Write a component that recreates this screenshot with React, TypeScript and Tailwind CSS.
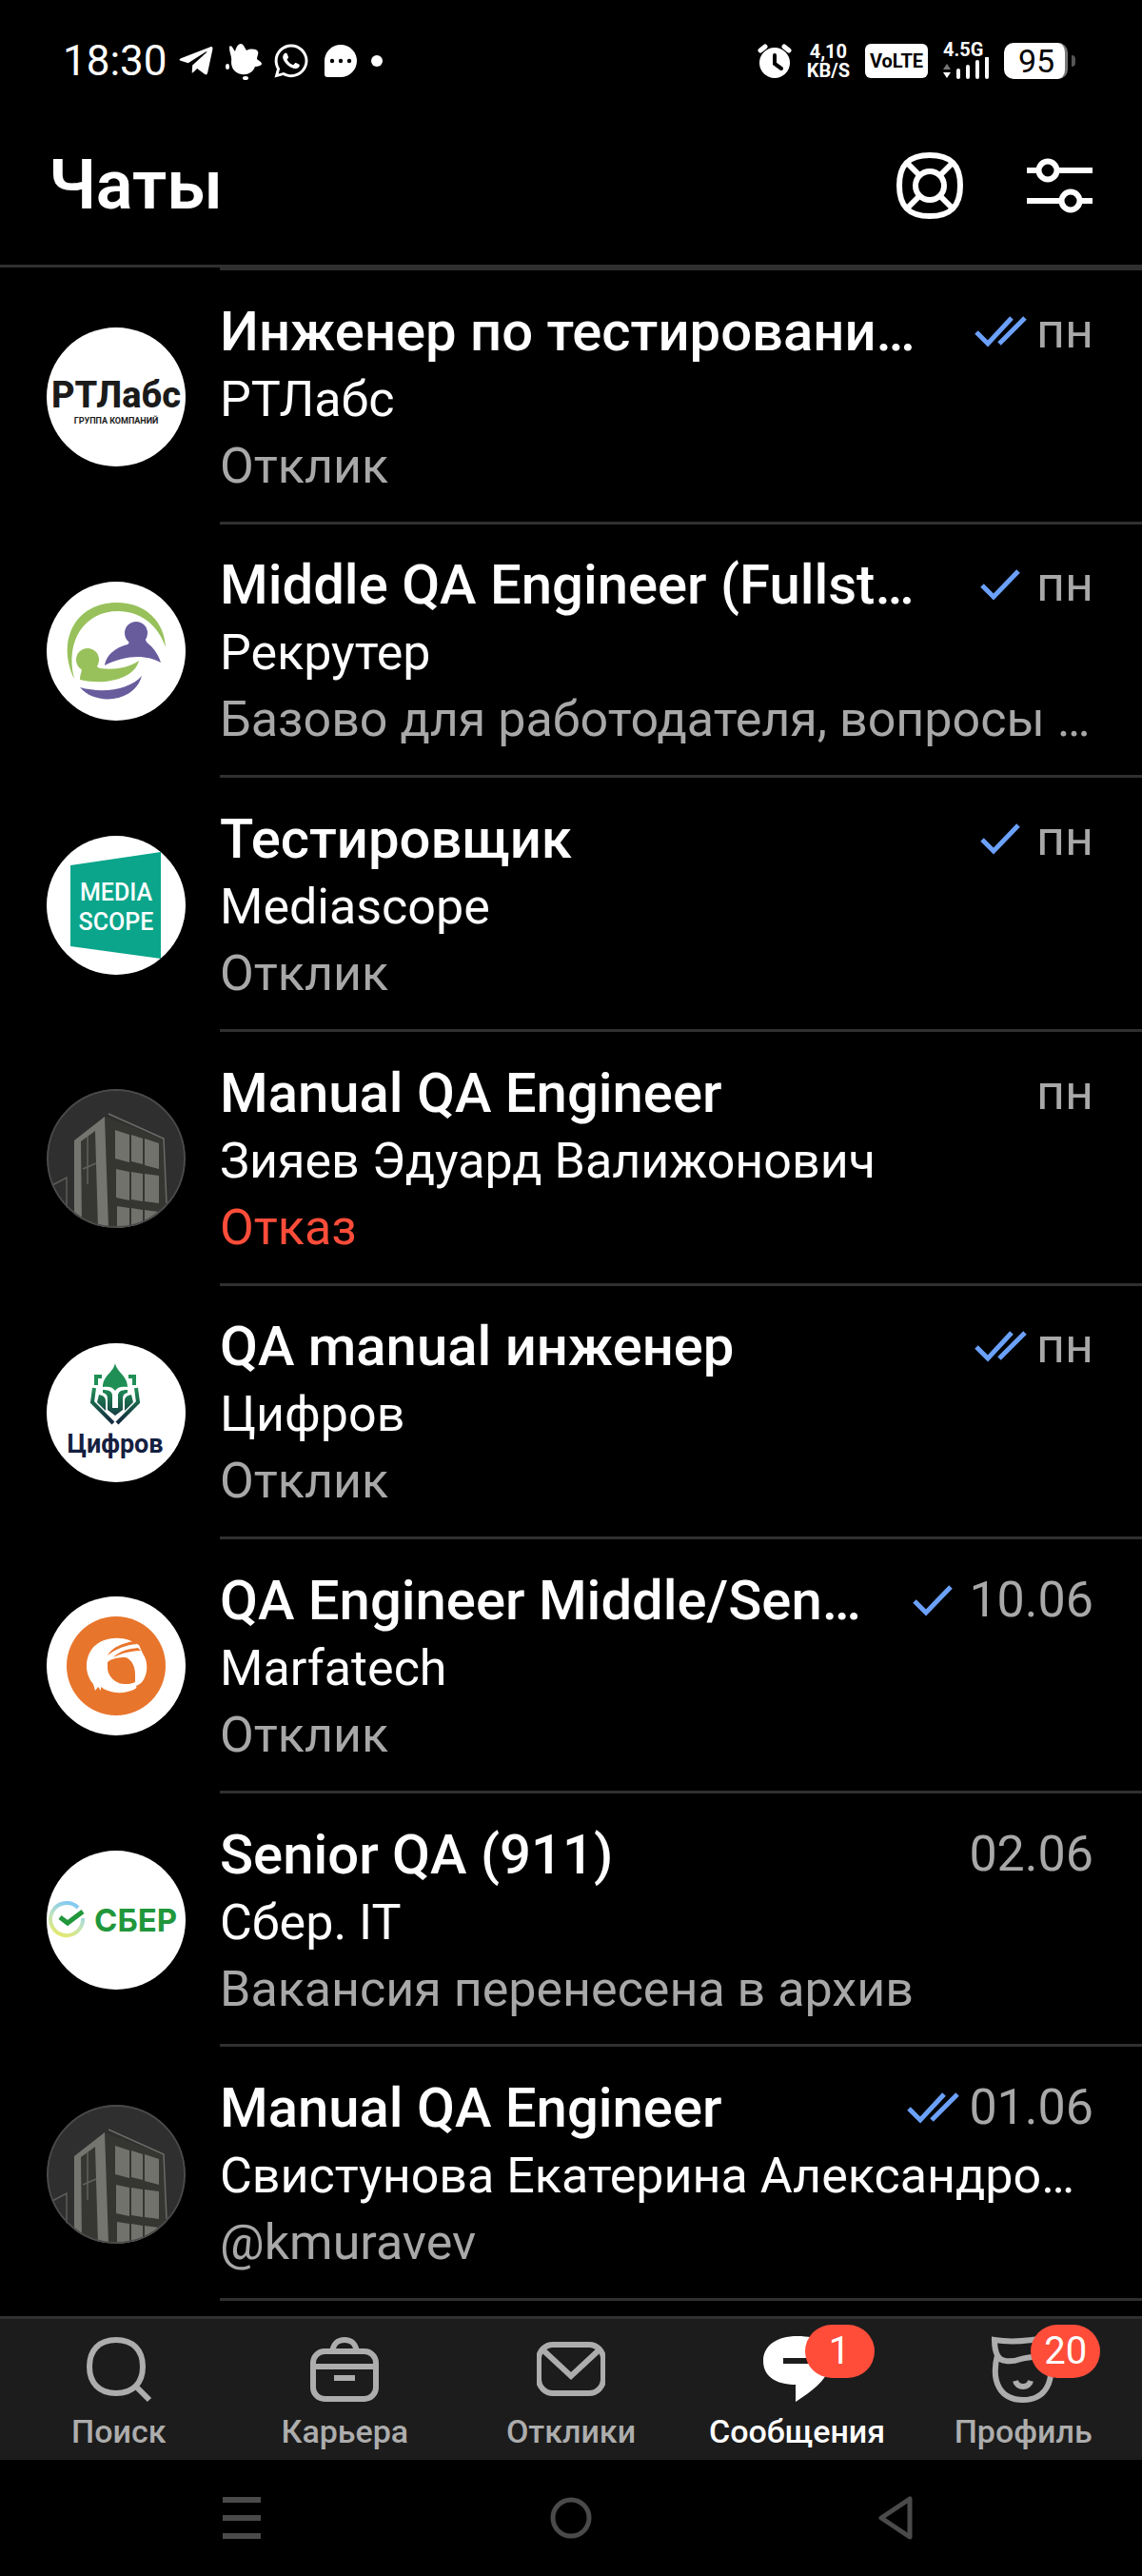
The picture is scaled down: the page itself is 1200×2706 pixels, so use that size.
import type { ReactNode } from 'react'
import { FaTelegramPlane, FaWhatsapp } from 'react-icons/fa'

type Chat = {
  id: number
  title: string
  company: string
  preview: string
  date: string
  status?: 'sent' | 'read'
  rejected?: boolean
  logo: ReactNode
}

/* ---------- avatars (all drawn on a 146x146 circle) ---------- */

function RtLabsLogo() {
  return (
    <svg viewBox="0 0 146 146" className="size-full bg-white">
      <text x="73" y="84" textAnchor="middle" fill="#1b1b1b" className="font-[Roboto,sans-serif] text-[38px] font-extrabold">
        РТЛабс
      </text>
      <text x="73" y="101" textAnchor="middle" fill="#1b1b1b" className="font-[Roboto,sans-serif] text-[9px] font-bold">
        ГРУППА КОМПАНИЙ
      </text>
    </svg>
  )
}

function RecruiterLogo() {
  return (
    <svg viewBox="0 0 146 146" className="size-full bg-white">
      <g fill="#98c15c">
        <path d="M29 102C10 62 30 22 74 22c30 0 50 20 51 47C117 45 98 31 75 31 40 31 19 62 29 102Z" />
        <circle cx="43" cy="82" r="12" />
        <path d="M36 90c2 4-1 6-1 13 25 6 57 0 62-20-12 8-27 10-41 8-4-1-3-3-2-6Z" />
      </g>
      <g fill="#685c9d">
        <circle cx="94" cy="54" r="12" />
        <path d="M61 88c2-13 15-20 24-22 2-1 2-3 0-8h19c-1 5 2 6 6 10 5 5 8 11 10 17-14-8-36-9-59 3Z" />
        <path d="M35 111c15 19 57 17 65-12-12 14-40 19-65 12Z" />
      </g>
    </svg>
  )
}

function MediascopeLogo() {
  return (
    <svg viewBox="0 0 146 146" className="size-full bg-white">
      <path d="M25 31 120 17v112L25 116Z" fill="#0aa58b" />
      <g fill="#fff" textAnchor="middle" className="font-[Roboto,sans-serif] text-[25px] font-medium">
        <text x="73" y="68">MEDIA</text>
        <text x="73" y="99">SCOPE</text>
      </g>
    </svg>
  )
}

function BuildingLogo() {
  return (
    <svg viewBox="0 0 146 146" className="size-full bg-[#2f2f2f]">
      <path d="M6 101 21 93v40" fill="none" stroke="#5c5c59" strokeWidth="1.5" />
      <path d="M61 29 124 53l2 93H64Z" fill="#353532" />
      <path d="M29 54 61 29l4 117H29Z" fill="#757570" />
      <path d="M36 55 51 44l3 102H37Z" fill="#363633" />
      <path d="M43 50v50M38 84l14-6" stroke="#60605c" strokeWidth="1.5" />
      <path d="m65 26 58 26 3 68" fill="none" stroke="#6a6a66" strokeWidth="1.5" />
      <g fill="#72726d">
        <path d="m72 43 15 5v29l-15-4ZM89 48l12 4v27l-12-3ZM103 52l15 5v27l-15-4Z" />
        <path d="m73 84 14 3v30l-14-3ZM89 87l12 2v29l-12-2ZM103 89l15 2v29l-15-2Z" />
        <path d="m74 123 13 2v21H74ZM89 125l12 2v19H89ZM103 127l15 2v17h-15Z" />
      </g>
      <circle cx="73" cy="73" r="72" fill="none" stroke="#4a4a4a" strokeWidth="2" />
    </svg>
  )
}

function TsifrovLogo() {
  return (
    <svg viewBox="0 0 146 146" className="size-full bg-white">
      <defs>
        <linearGradient id="helmet" gradientUnits="userSpaceOnUse" x1="0" y1="21" x2="0" y2="86">
          <stop offset="0.4" stopColor="#1f8f55" />
          <stop offset="1" stopColor="#14233f" />
        </linearGradient>
      </defs>
      <g fill="url(#helmet)">
        <path d="M72 21c2 10 13 13 13 25-6-1-11 0-13 4-2-4-7-5-13-4 0-12 11-15 13-25Z" />
        <path d="M59 49c7 0 10 2 10 6v13h6V55c0-4 3-6 10-6v3c-4 1-5 3-5 7v11l-8 6-8-6V59c0-4-1-6-5-7Z" />
        <path d="M55 54c5 1 7 3 7 7v10l-9-9ZM89 54c-5 1-7 3-7 7v10l9-9Z" />
      </g>
      <g fill="none" stroke="url(#helmet)" strokeWidth="4">
        <path d="M58 35h-6v9M86 35h6v9M50 47l-2 15 22 22M94 47l2 15-22 22" />
      </g>
      <text x="72" y="115" textAnchor="middle" fill="#14203f" className="font-[Roboto,sans-serif] text-[27px] font-bold">
        Цифров
      </text>
    </svg>
  )
}

function MarfatechLogo() {
  return (
    <svg viewBox="0 0 146 146" className="size-full bg-white">
      <circle cx="73" cy="73" r="52" fill="#e8752c" />
      <path
        d="M87 46C72 41 55 45 47 56c-8 12-6 27 2 36l2 7 3-4 3 4v-4c13 10 37 8 45-7 5-10 4-21-1-28l-4-9-6-3Z"
        fill="#fff"
      />
      <path d="M64 69c4-4 12-5 19-5 6 2 10 9 10 18v8c-3 2-12 3-17 1-7-3-12-9-12-16Z" fill="#e8752c" />
      <path d="M64 62c5-9 16-13 28-15l3 3c-12 1-22 5-31 12ZM70 64c7-7 16-9 26-10l3 3c-10 0-18 2-29 7ZM94 94c5-2 8-5 10-11 0 8-3 13-9 15Z" fill="#e8752c" />
    </svg>
  )
}

function SberLogo() {
  return (
    <svg viewBox="0 0 146 146" className="size-full bg-white">
      <defs>
        <linearGradient id="sber" x1="0.6" y1="0" x2="0.2" y2="1">
          <stop offset="0" stopColor="#83c9f2" />
          <stop offset="0.5" stopColor="#bfe3c0" />
          <stop offset="1" stopColor="#e6e86a" />
        </linearGradient>
      </defs>
      <path d="M33 60A17 17 0 1 0 38 71" fill="none" stroke="url(#sber)" strokeWidth="4" />
      <path d="m14 70 8 6 16-12" fill="none" stroke="#21973b" strokeWidth="5" />
      <text x="50" y="85" fill="#21973b" className="font-[Inter,sans-serif] text-[33px] font-bold">
        СБЕР
      </text>
    </svg>
  )
}

/* ---------- data ---------- */

const CHATS: Chat[] = [
  { id: 1, title: 'Инженер по тестировани…', company: 'РТЛабс', preview: 'Отклик', date: 'пн', status: 'read', logo: <RtLabsLogo /> },
  { id: 2, title: 'Middle QA Engineer (Fullst…', company: 'Рекрутер', preview: 'Базово для работодателя, вопросы …', date: 'пн', status: 'sent', logo: <RecruiterLogo /> },
  { id: 3, title: 'Тестировщик', company: 'Mediascope', preview: 'Отклик', date: 'пн', status: 'sent', logo: <MediascopeLogo /> },
  { id: 4, title: 'Manual QA Engineer', company: 'Зияев Эдуард Валижонович', preview: 'Отказ', date: 'пн', rejected: true, logo: <BuildingLogo /> },
  { id: 5, title: 'QA manual инженер', company: 'Цифров', preview: 'Отклик', date: 'пн', status: 'read', logo: <TsifrovLogo /> },
  { id: 6, title: 'QA Engineer Middle/Sen…', company: 'Marfatech', preview: 'Отклик', date: '10.06', status: 'sent', logo: <MarfatechLogo /> },
  { id: 7, title: 'Senior QA (911)', company: 'Сбер. IT', preview: 'Вакансия перенесена в архив', date: '02.06', logo: <SberLogo /> },
  { id: 8, title: 'Manual QA Engineer', company: 'Свистунова Екатерина Александро…', preview: '@kmuravev', date: '01.06', status: 'read', logo: <BuildingLogo /> },
]

/* ---------- status bar ---------- */

function StatusBar() {
  return (
    <div className="flex h-32 items-center justify-between pr-[70px] pl-[66px]">
      <div className="flex items-center gap-2.5">
        <span className="text-[44px] leading-none">18:30</span>
        <FaTelegramPlane className="size-10" />
        <svg viewBox="0 0 40 40" className="size-10" fill="currentColor">
          <path d="M5 6c0-3 3-2 4 1l2 3c1-4 3-8 6-8s4 4 6 7c4-2 10-2 12 1 1 3-1 5-1 8 2 2 5 3 5 5s-4 3-7 3c-2 6-8 9-14 8-7-1-11-6-11-13 1-6-2-9-2-15Z" />
          <ellipse cx="3" cy="26" rx="2" ry="3" />
          <ellipse cx="22" cy="38" rx="3" ry="2" />
        </svg>
        <FaWhatsapp className="size-10" />
        <svg viewBox="0 0 36 36" className="mx-1 size-9">
          <path d="M1 18a17 17 0 1 1 17 17H4c-2 0-3-1-3-3Z" fill="currentColor" />
          <circle cx="9" cy="18" r="2.2" />
          <circle cx="18" cy="18" r="2.2" />
          <circle cx="27" cy="18" r="2.2" />
        </svg>
        <span className="size-3 rounded-full bg-white" />
      </div>
      <div className="flex items-center gap-4">
        <svg viewBox="0 0 36 38" className="h-[38px] w-9">
          <circle cx="18" cy="21" r="16" fill="currentColor" />
          <path d="m3 8 5-4M33 8l-5-4" stroke="currentColor" strokeWidth="5" strokeLinecap="round" />
          <path d="M18 13v9l7 5" fill="none" stroke="#000" strokeWidth="4" strokeLinecap="round" />
        </svg>
        <span className="flex flex-col items-center text-xl leading-5 font-bold">
          <span>4,10</span>
          <span>KB/S</span>
        </span>
        <span className="flex h-9 w-[66px] items-center justify-center rounded-md bg-white text-xl font-bold text-black">
          VoLTE
        </span>
        <span className="flex w-12 flex-col">
          <span className="text-xl leading-4 font-bold">4.5G</span>
          <svg viewBox="0 0 48 24" className="h-6 w-12">
            <path d="m0 13 4-6 4 6Z" fill="#777" />
            <path d="m0 16 4 6 4-6Z" fill="currentColor" />
            <path d="M16 14v7M26 10v11M36 5v16M46 1v20" stroke="currentColor" strokeWidth="4" strokeLinecap="round" />
          </svg>
        </span>
        <span className="flex items-center gap-1">
          <span className="flex h-[38px] w-[67px] items-center justify-center rounded-[10px] border-r-3 border-[#777] bg-white pl-1 text-[34px] leading-none text-black">
            95
          </span>
          <span className="h-3 w-1 rounded-r bg-[#555]" />
        </span>
      </div>
    </div>
  )
}

function Header() {
  return (
    <header className="flex h-[153px] items-center justify-between border-b-3 border-[#303030] pr-[51px] pb-4 pl-[51px]">
      <h1 className="text-[72px] leading-[88px] font-semibold">Чаты</h1>
      <div className="flex gap-16">
        <button type="button" aria-label="Помощь">
          <svg viewBox="0 0 72 72" className="size-[72px]" fill="none" stroke="currentColor" strokeWidth="6">
            <path d="M36 4C58 4 68 14 68 36S58 68 36 68 4 58 4 36 14 4 36 4Z" />
            <circle cx="36" cy="36" r="15" />
            <path d="m13 13 13 13M59 13 46 26M13 59l13-13M59 59 46 46" />
          </svg>
        </button>
        <button type="button" aria-label="Фильтры">
          <svg viewBox="0 0 72 72" className="size-[72px]" fill="none" stroke="currentColor" strokeWidth="6">
            <path d="M2 20h12M33 20h38M2 52h36M58 52h13" />
            <circle cx="24" cy="20" r="9.5" />
            <circle cx="48" cy="52" r="9.5" />
          </svg>
        </button>
      </div>
    </header>
  )
}

/* ---------- chat list ---------- */

function Ticks({ status }: { status: 'sent' | 'read' }) {
  return (
    <svg viewBox="0 0 60 36" className="h-9 w-[60px]" fill="none" stroke="#6ba1fa" strokeWidth="5">
      {status === 'read' ? <path d="m5 19 12 12L42 4M29 31 56 4" /> : <path d="m11 19 12 12L49 4" />}
    </svg>
  )
}

function ChatRow({ chat }: { chat: Chat }) {
  return (
    <li className="flex flex-1">
      <a href="#" className="flex min-w-0 flex-1 items-stretch pl-[49px]">
        <span className="mr-9 size-[146px] shrink-0 self-center overflow-hidden rounded-full">{chat.logo}</span>
        <span className="flex min-w-0 flex-1 flex-col justify-center border-b-3 border-[#303030] pt-1 pr-[51px] whitespace-nowrap">
          <span className="flex items-center justify-between">
            <span className="text-[58px] leading-[72px] font-medium">{chat.title}</span>
            <span className="flex items-center gap-2 text-[52px] leading-[72px] text-[#a8a8a8]">
              {chat.status && <Ticks status={chat.status} />}
              {chat.date}
            </span>
          </span>
          <span className="text-[52px] leading-[72px]">{chat.company}</span>
          <span className={chat.rejected ? 'text-[52px] leading-[68px] text-[#ff4d3a]' : 'text-[52px] leading-[68px] text-[#a8a8a8]'}>
            {chat.preview}
          </span>
        </span>
      </a>
    </li>
  )
}

/* ---------- bottom navigation ---------- */

function NavItem({ label, active, badge, children }: { label: string; active?: boolean; badge?: number; children: ReactNode }) {
  return (
    <a
      href="#"
      className={
        active
          ? 'flex flex-1 flex-col items-center gap-2.5 text-white'
          : 'flex flex-1 flex-col items-center gap-2.5 text-[#adadad]'
      }
    >
      <span className="relative">
        <svg viewBox="0 0 72 72" className="size-[72px]" fill="none" stroke="currentColor" strokeWidth="6">
          {children}
        </svg>
        {badge && (
          <span className="absolute -top-2.5 left-11 flex h-14 w-[73px] items-center justify-center rounded-full bg-[#ff4d3a] text-[40px] leading-none text-white">
            {badge}
          </span>
        )}
      </span>
      <span className="text-[34px] leading-10 font-medium">{label}</span>
    </a>
  )
}

function BottomNav() {
  return (
    <nav className="flex h-[151px] border-t-3 border-[#303030] bg-[#1c1c1c] px-1.5 pt-4">
      <NavItem label="Поиск">
        <path d="M33 6c18 0 28 11 28 28S51 62 33 62 5 51 5 34 15 6 33 6ZM53 54l15 15" />
      </NavItem>
      <NavItem label="Карьера">
        <rect x="3" y="18" width="66" height="50" rx="12" />
        <path d="M4 34h64M25 46h22M23 18C25 9 29 6 36 6s11 3 13 12" />
      </NavItem>
      <NavItem label="Отклики">
        <rect x="2" y="11" width="68" height="51" rx="15" />
        <path d="m7 17 29 27 29-27" />
      </NavItem>
      <NavItem label="Сообщения" active badge={1}>
        <path d="M36 2c22 0 35 8 35 25 0 19-20 33-37 44V53C13 53 0 44 0 28S14 2 36 2Z" fill="currentColor" stroke="none" />
        <path d="M21 28h30" stroke="#1c1c1c" />
      </NavItem>
      <NavItem label="Профиль" badge={20}>
        <path d="M6 6c18 3 38 1 58-3v12c-6 10-20 8-30 11-12 4-22 3-25-4C6 16 6 10 6 6ZM9 22C2 50 12 69 36 69s34-20 27-47M28 49c2 8 14 8 16 0" />
      </NavItem>
    </nav>
  )
}

function SystemNav() {
  return (
    <div className="flex h-[122px] items-center justify-between px-[231px] text-[#4a4a4a]">
      <button type="button" aria-label="Недавние">
        <svg viewBox="0 0 46 46" className="size-[46px]" stroke="currentColor" strokeWidth="6">
          <path d="M3 4h40M3 23h40M3 42h40" />
        </svg>
      </button>
      <button type="button" aria-label="Домой">
        <svg viewBox="0 0 46 46" className="size-[46px]" fill="none" stroke="currentColor" strokeWidth="5">
          <circle cx="23" cy="23" r="19" />
        </svg>
      </button>
      <button type="button" aria-label="Назад">
        <svg viewBox="0 0 46 46" className="size-[46px]" fill="none" stroke="currentColor" strokeWidth="5" strokeLinejoin="round">
          <path d="M3 23 33 3v40Z" />
        </svg>
      </button>
    </div>
  )
}

export default function App() {
  return (
    <div className="flex min-h-screen flex-col bg-black font-[Roboto,sans-serif] text-white">
      <StatusBar />
      <Header />
      <main className="flex flex-1 flex-col pb-4">
        <div className="ml-[231px] border-b-3 border-[#303030]" />
        <ul className="flex flex-1 flex-col">
          {CHATS.map((chat) => (
            <ChatRow key={chat.id} chat={chat} />
          ))}
        </ul>
      </main>
      <BottomNav />
      <SystemNav />
    </div>
  )
}
